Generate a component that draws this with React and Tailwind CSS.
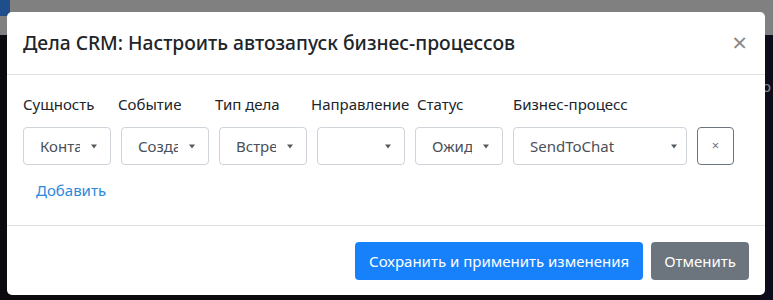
import React from "react";

const font = { fontFamily: '"Noto Sans", "Open Sans", sans-serif' };

const Caret = () => (
	<svg width="6" height="5" viewBox="0 0 6 5" className="shrink-0">
		<path d="M0 0.5 L6 0.5 L3 4.5 Z" fill="#555b61" />
	</svg>
);

const FakeSelect = ({ value, wide }) => (
	<div
		className={`h-[38px] flex items-center border border-[#ced4da] rounded-[4px] bg-white ${
			wide ? "w-[174px]" : "w-[88px]"
		}`}
	>
		<div
			className={`ml-[16px] overflow-hidden whitespace-nowrap text-[15px] text-[#495057] ${
				wide ? "w-[135px]" : "w-[40px]"
			}`}
		>
			{value}
		</div>
		<div className="flex-1 flex justify-center pr-[3px]">
			<Caret />
		</div>
	</div>
);

export default function App() {
	const labels = [
		{ text: "Сущность", w: "w-[95px]" },
		{ text: "Событие", w: "w-[97px]" },
		{ text: "Тип дела", w: "w-[96px]" },
		{ text: "Направление", w: "w-[106px]" },
		{ text: "Статус", w: "w-[96px]" },
		{ text: "Бизнес-процесс", w: "" }
	];
	const values = ["Конта", "Созда", "Встре", "", "Ожид"];

	return (
		<div className="relative w-[773px] h-[300px] overflow-hidden bg-[#0b0b0f]" style={font}>
			<div className="h-[35px] bg-[#808080] relative">
				<div className="absolute left-0 top-0 w-[10px] h-[16px] bg-[#1f4e8c]" />
			</div>
			<div className="absolute right-0 top-[35px] w-[12px] h-[265px] bg-[#0e0c1c]">
				<span className="absolute left-[1px] top-[40px] text-[15px] text-[#8a8a8a]">o</span>
			</div>

			<div className="absolute left-[7px] top-[12px] w-[758px] h-[283px] bg-white rounded-[5px] flex flex-col">
				<div className="h-[63px] px-[16px] flex items-center justify-between border-b border-[#dee2e6]">
					<h5 className="text-[19.3px] font-medium text-[#212529] leading-none">
						Дела CRM: Настроить автозапуск бизнес-процессов
					</h5>
					<span className="text-[26px] leading-none text-[#8a8a8a] mr-[2px] -mt-[2px]">×</span>
				</div>

				<div className="h-[151px] px-[16px] pt-[17px] border-b border-[#dee2e6]">
					<div className="flex h-[24px] items-center text-[15px] text-[#212529]">
						{labels.map((l) => (
							<div key={l.text} className={`${l.w} whitespace-nowrap`}>
								{l.text}
							</div>
						))}
					</div>
					<div className="flex gap-[10px] mt-[11px]">
						{values.map((v, i) => (
							<FakeSelect key={i} value={v} />
						))}
						<FakeSelect value="SendToChat" wide />
						<div className="w-[37px] h-[38px] border border-[#6c757d] rounded-[4px] flex items-center justify-center text-[13px] text-[#6c757d]">
							×
						</div>
					</div>
					<div className="mt-[13px] pl-[13px] h-[24px] flex items-center text-[15px] text-[#2a88dd]">
						Добавить
					</div>
				</div>

				<div className="flex-1 flex justify-end items-start pt-[16px] pr-[16px] gap-[8px]">
					<button className="h-[38px] px-[14px] rounded-[4px] bg-[#1781fb] text-white text-[15px]">
						Сохранить и применить изменения
					</button>
					<button className="h-[38px] px-[13px] rounded-[4px] bg-[#6c757d] text-white text-[15px]">
						Отменить
					</button>
				</div>
			</div>
		</div>
	);
}
